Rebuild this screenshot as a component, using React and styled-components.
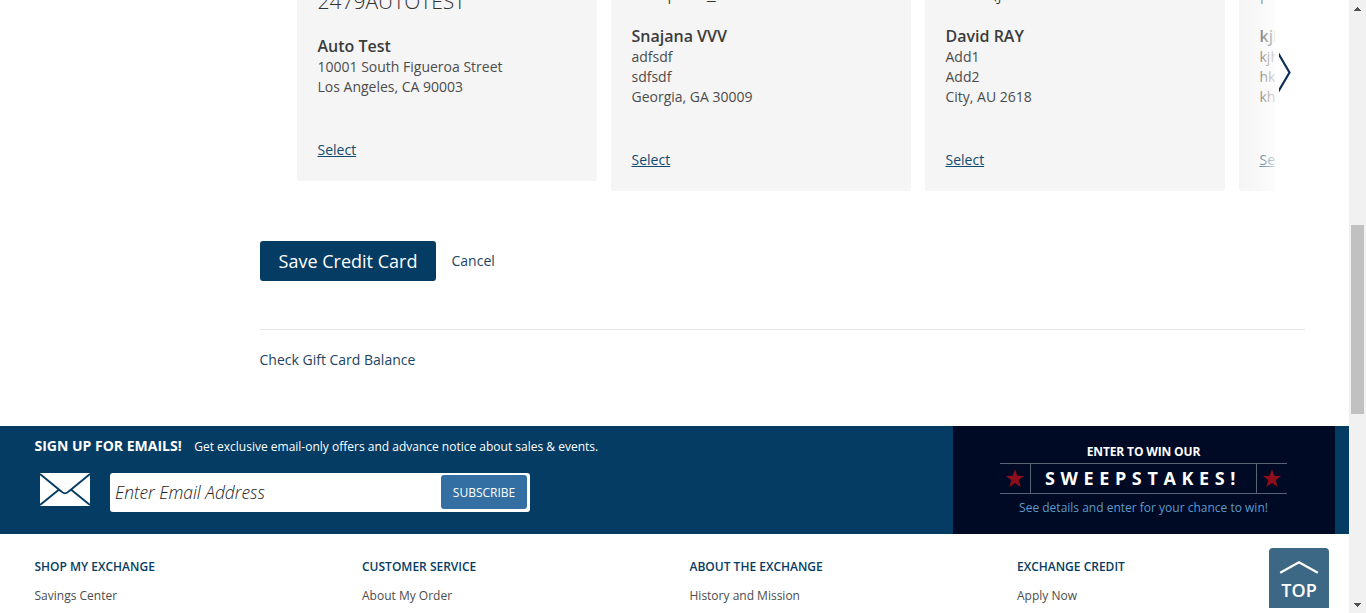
import React from "react";
import styled, { createGlobalStyle } from "styled-components";

const Global = createGlobalStyle`
  * { box-sizing: border-box; }
  html, body { margin: 0; height: 100%; overflow: hidden; background: #fff; }
  body { font-family: "Open Sans", "Noto Sans", sans-serif; font-size: 14px; color: #4c4c4c; }
`;

const Frame = styled.div`
  display: grid;
  grid-template-columns: 1349px 17px;
  height: 613px;
  overflow: hidden;
`;

const Page = styled.main`
  display: flex;
  flex-direction: column;
  height: 613px;
  overflow: hidden;
`;

const Carousel = styled.section`
  position: relative;
  flex: none;
  width: 978px;
  height: 191px;
  margin-left: 297px;
`;

const Track = styled.div`
  display: flex;
  align-items: flex-start;
  gap: 14px;
  height: 191px;
  overflow: hidden;
`;

const Card = styled.article`
  flex: none;
  display: flex;
  flex-direction: column;
  justify-content: flex-end;
  width: 300px;
  height: ${(p) => p.$height}px;
  padding: 0 20.5px 21px;
  overflow: hidden;
  border-radius: 0 0 3px 3px;
  background: #f5f5f5;
`;

const Nickname = styled.div`
  flex: none;
  height: 26px;
  margin-bottom: 22px;
  color: #333;
  font-size: 21px;
  font-weight: 300;
  line-height: 26px;
  white-space: nowrap;
`;

const Name = styled.div`
  flex: none;
  color: #3c3c3c;
  font-size: 16px;
  font-weight: 600;
  line-height: 21px;
`;

const Address = styled.div`
  flex: none;
  line-height: 20px;
  margin-bottom: 43px;
`;

const SelectLink = styled.a`
  flex: none;
  align-self: flex-start;
  color: #134a70;
  line-height: 20px;
  text-decoration: underline;
`;

const Fade = styled.div`
  position: absolute;
  top: 0;
  right: 0;
  width: 36px;
  height: 191px;
  background: linear-gradient(to right, rgba(255, 255, 255, 0), rgba(255, 255, 255, 0.35) 58%, rgba(255, 255, 255, 0.8));
`;

const NextArrow = styled.svg`
  position: absolute;
  left: 982px;
  top: 52px;
`;

const Actions = styled.div`
  flex: none;
  display: flex;
  align-items: center;
  gap: 15.5px;
  width: 1045px;
  height: 139px;
  margin-left: 260px;
  padding-top: 2px;
  border-bottom: 1px solid #e8e8e8;
`;

const SaveButton = styled.button`
  width: 176px;
  height: 40px;
  padding: 0;
  border: 0;
  border-radius: 3px;
  background: #053c63;
  color: #fff;
  font: 400 18px/40px "Open Sans", sans-serif;
`;

const TextLink = styled.a`
  color: #1c4561;
  line-height: 20px;
`;

const GiftCard = styled.div`
  flex: none;
  height: 96px;
  padding: 20px 0 0 259.5px;
`;

const Banner = styled.section`
  flex: none;
  display: grid;
  grid-template-columns: 953px 382px;
  height: 108px;
  background: #053c63;
  color: #fff;
`;

const SignUp = styled.div`
  padding: 10px 0 0 34.5px;
`;

const SignUpHeading = styled.div`
  display: flex;
  align-items: baseline;
  gap: 12.5px;
  height: 20px;
  line-height: 20px;
  font-size: 12px;

  strong { font-size: 14px; font-weight: 700; }
`;

const SignUpForm = styled.form`
  display: flex;
  align-items: flex-start;
  gap: 20px;
  margin: 17px 0 0 5.5px;
`;

const EmailField = styled.div`
  display: flex;
  justify-content: space-between;
  width: 420px;
  height: 39px;
  padding: 2px 3px 3px 5px;
  border-radius: 3px;
  background: #fff;
`;

const Placeholder = styled.span`
  color: #222;
  font-size: 17.4px;
  font-style: italic;
  font-weight: 300;
  line-height: 34px;
`;

const Subscribe = styled.button`
  width: 86px;
  height: 34px;
  padding: 0;
  border: 0;
  border-radius: 3px;
  background: #336fa2;
  color: #fff;
  font: 400 12px/35px "Open Sans", sans-serif;
`;

const Sweepstakes = styled.aside`
  display: flex;
  flex-direction: column;
  align-items: center;
  padding: 17px 1px 0 0;
  background: #000a24;
  font-size: 12px;
`;

const SweepLead = styled.div`
  height: 20px;
  font-weight: 700;
  letter-spacing: -0.15px;
  line-height: 17px;
`;

const SweepTitle = styled.div`
  display: grid;
  grid-template-columns: 30px 227px 30px;
  align-items: center;
  justify-items: center;
  width: 287px;
  height: 31px;
  margin-right: 1px;
  border: solid #5b6275;
  border-width: 1px 0;
`;

const SweepWord = styled.div`
  width: 227px;
  height: 29px;
  padding-left: 14.6px;
  border: solid #5b6275;
  border-width: 0 1px;
  font-size: 18px;
  font-weight: 700;
  letter-spacing: 5.6px;
  line-height: 29px;
  white-space: nowrap;
`;

const SweepDetails = styled.div`
  margin-top: 5px;
  color: #5e9acb;
  font-size: 12px;
  line-height: 18px;
`;

const Footer = styled.footer`
  position: relative;
  display: grid;
  grid-template-columns: repeat(4, 327.5px);
  padding: 23px 0 0 34.5px;
  height: 79px;
`;

const FooterColumn = styled.div`
  font-size: 12px;
  line-height: 20px;
`;

const FooterHeading = styled.div`
  margin-bottom: 9px;
  color: #053c63;
  font-weight: 600;
`;

const TopButton = styled.a`
  position: absolute;
  left: 1269px;
  top: 14px;
  display: flex;
  flex-direction: column;
  align-items: center;
  width: 60px;
  height: 60px;
  padding-top: 12px;
  border-radius: 4px 4px 0 0;
  background: #3d6885;
  color: #fff;
  font-size: 18px;
  font-weight: 600;
  line-height: 20px;

  svg { flex: none; margin-bottom: 6px; }
`;

const Scrollbar = styled.div`
  display: flex;
  flex-direction: column;
  justify-content: space-between;
  align-items: center;
  height: 613px;
  padding: 7px 0 6px;
  background: #f1f1f1;
`;

const Thumb = styled.div`
  width: 13px;
  height: 189px;
  margin-top: 24px;
  background: #c1c1c1;
`;

const cards = [
  { nick: "2479AUTOTEST", name: "Auto Test", lines: ["10001 South Figueroa Street", "Los Angeles, CA 90003"], height: 181 },
  { nick: "Teriplait_1", name: "Snajana VVV", lines: ["adfsdf", "sdfsdf", "Georgia, GA 30009"], height: 191 },
  { nick: "Hom(j", name: "David RAY", lines: ["Add1", "Add2", "City, AU 2618"], height: 191 },
  { nick: "ption", name: "kjhkj", lines: ["kjhkj", "hkjhk", "khkjh"], height: 191 },
];

const columns = [
  ["SHOP MY EXCHANGE", "Savings Center"],
  ["CUSTOMER SERVICE", "About My Order"],
  ["ABOUT THE EXCHANGE", "History and Mission"],
  ["EXCHANGE CREDIT", "Apply Now"],
];

const Star = () => (
  <svg width="20" height="20" viewBox="0 0 20 20">
    <path d="M10 .3 12.3 6.8 19.2 7 13.7 11.1 15.7 18 10 14 4.3 18 6.3 11.1.8 7 7.7 6.8Z" fill="#8f0e1b" />
  </svg>
);

export default function App() {
  return (
    <Frame>
      <Global />
      <Page>
        <Carousel>
          <Track>
            {cards.map((c) => (
              <Card key={c.nick} $height={c.height}>
                <Nickname>{c.nick}</Nickname>
                <Name>{c.name}</Name>
                <Address>
                  {c.lines.map((l) => <div key={l}>{l}</div>)}
                </Address>
                <SelectLink>Select</SelectLink>
              </Card>
            ))}
          </Track>
          <Fade />
          <NextArrow width="14" height="42" viewBox="0 0 14 42" fill="none" stroke="#0b2f58" strokeWidth="2.2">
            <path d="M-1 1 10.5 20.5-1 40" />
          </NextArrow>
        </Carousel>
        <Actions>
          <SaveButton>Save Credit Card</SaveButton>
          <TextLink>Cancel</TextLink>
        </Actions>
        <GiftCard><TextLink>Check Gift Card Balance</TextLink></GiftCard>
        <Banner>
          <SignUp>
            <SignUpHeading>
              <strong>SIGN UP FOR EMAILS!</strong>
              <span>Get exclusive email-only offers and advance notice about sales &amp; events.</span>
            </SignUpHeading>
            <SignUpForm>
              <svg width="50" height="33" viewBox="0 0 50 33">
                <path d="M0 0H50V33H0Z" fill="#fff" />
                <path d="M0 1 21 18.2Q25 22.5 29 18.2L50 1M0 32 18.5 17M50 32 31.5 17" fill="none" stroke="#053c63" strokeWidth="1.9" />
              </svg>
              <EmailField>
                <Placeholder>Enter Email Address</Placeholder>
                <Subscribe type="button">SUBSCRIBE</Subscribe>
              </EmailField>
            </SignUpForm>
          </SignUp>
          <Sweepstakes>
            <SweepLead>ENTER TO WIN OUR</SweepLead>
            <SweepTitle>
              <Star />
              <SweepWord>SWEEPSTAKES!</SweepWord>
              <Star />
            </SweepTitle>
            <SweepDetails>See details and enter for your chance to win!</SweepDetails>
          </Sweepstakes>
        </Banner>
        <Footer>
          {columns.map(([title, link]) => (
            <FooterColumn key={title}>
              <FooterHeading>{title}</FooterHeading>
              <div>{link}</div>
            </FooterColumn>
          ))}
          <TopButton>
            <svg width="40" height="14" viewBox="0 0 40 14" fill="none" stroke="#fff" strokeWidth="2.2">
              <path d="M1.2 12.7 20 2.3 38.8 12.7" />
            </svg>
            TOP
          </TopButton>
        </Footer>
      </Page>
      <Scrollbar>
        <svg width="7" height="4" viewBox="0 0 7 4" shapeRendering="crispEdges"><path d="M3 0H4V1H5V2H6V3H7V4H0V3H1V2H2V1H3Z" fill="#505050" /></svg>
        <Thumb />
        <svg width="7" height="4" viewBox="0 0 7 4" shapeRendering="crispEdges"><path d="M0 0H7V1H6V2H5V3H4V4H3V3H2V2H1V1H0Z" fill="#505050" /></svg>
      </Scrollbar>
    </Frame>
  );
}
